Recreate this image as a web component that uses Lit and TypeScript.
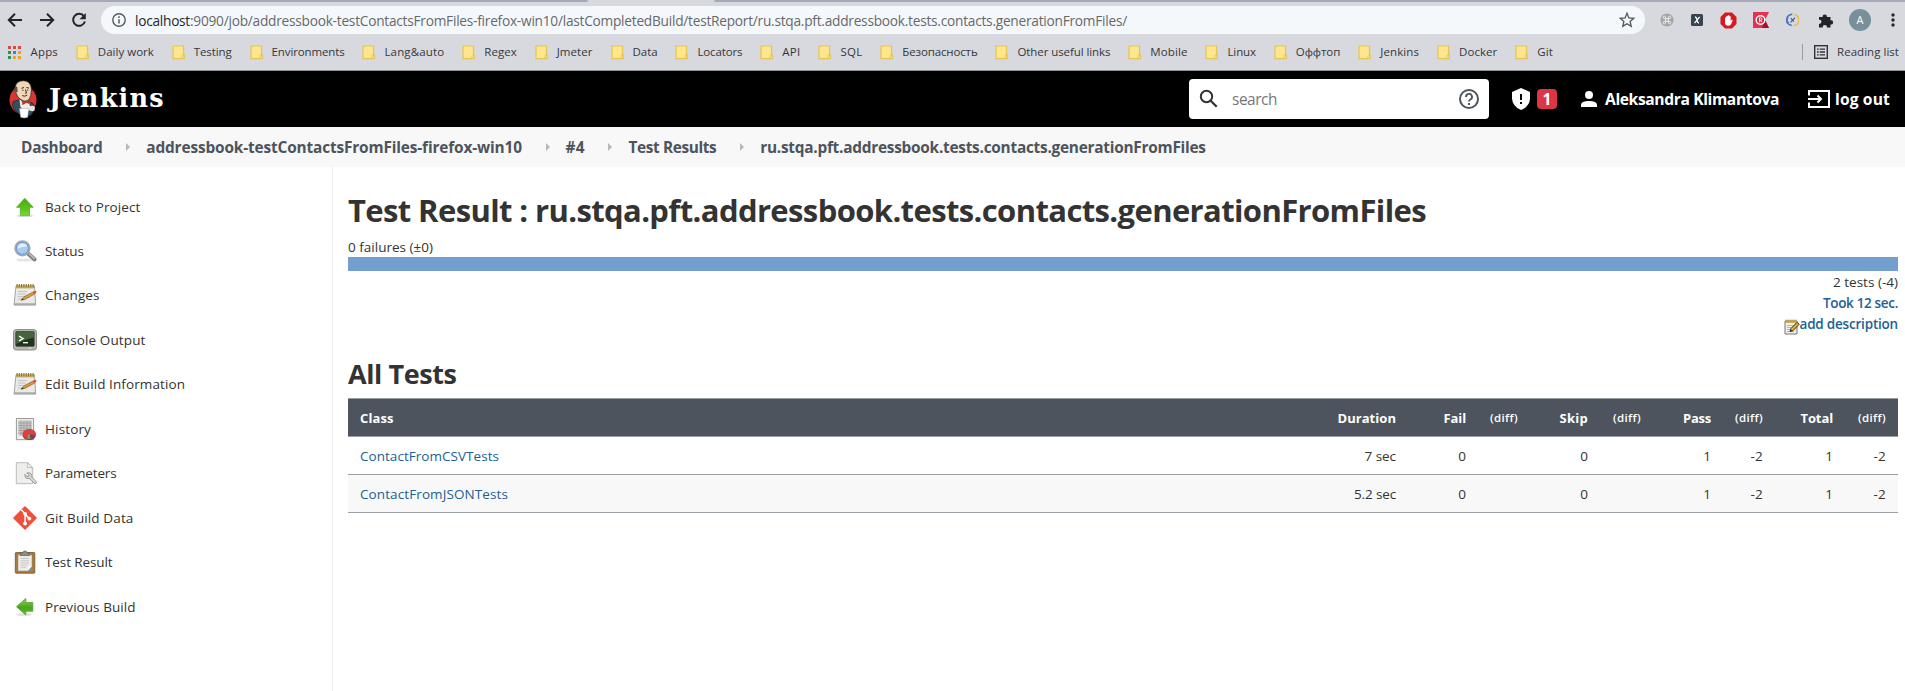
import { LitElement, html, css, svg, nothing } from "lit";
import { customElement, property } from "lit/decorators.js";

/** One line of text, tracked so that it occupies a given width. */
@customElement("text-run")
class TextRun extends LitElement {
  @property() text = "";
  @property({ type: Number }) width = 0;

  static styles = css`
    :host { display: inline-block; white-space: pre; flex: none; }
  `;

  render() {
    return html`<span>${this.text}</span>`;
  }

  updated() {
    const span = this.renderRoot.querySelector("span") as HTMLElement;
    span.style.letterSpacing = "0px";
    if (!this.width || !this.text) return;
    const natural = span.getBoundingClientRect().width;
    const spacing = (this.width - natural) / Array.from(this.text).length;
    span.style.letterSpacing = spacing.toFixed(4) + "px";
  }
}

const run = (text: string, width: number) => html`<text-run .text=${text} .width=${width}></text-run>`;

/* ---------- icons ---------- */

const notepad = svg`
  <path d="M3 3h18.500l1.200 19H1z" fill="#e9e9e7" stroke="#8f8f8b" stroke-width=".8"/>
  <path d="M1.200 20.300h21.300v1.900H1z" fill="#a9a9a5"/>
  <path d="M3.200 2.400h18v3h-18z" fill="#c9b668"/>
  <path d="M4 1v3.600M6.300 1v3.600M8.600 1v3.600M10.900 1v3.600M13.200 1v3.600M15.500 1v3.600M17.800 1v3.600M20.100 1v3.600" stroke="#8a7427" stroke-width="1.100"/>
  <path d="M5 8.500h9M5 11h8M5 13.500h6M5 16h4" stroke="#bdbdba" stroke-width=".9"/>
  <path d="M8 17.300l3-3.500 9.500-5 1.300 2.200-9.600 5.300z" fill="#d99a3c" stroke="#80551c" stroke-width=".6"/>
  <path d="M20 9l1.800-1q1.600-.3 1.900 1.100l-2.300 1.900z" fill="#d8493c"/>
  <path d="M8 17.300l1.700-2 1.200 1.300z" fill="#3b3327"/>`;

const taskIcons: Record<string, unknown> = {
  up: svg`
    <defs><linearGradient id="g-up" x1="0" y1="0" x2="0" y2="1"><stop offset="0" stop-color="#4ea51c"/><stop offset=".6" stop-color="#59c317"/><stop offset="1" stop-color="#7bdc38"/></linearGradient></defs>
    <ellipse cx="12" cy="20.800" rx="8.500" ry="1.300" fill="#d5d5d5"/>
    <path d="M11.800 3.300L20.200 12.300H16.500V20.300H7.300V12.300H3.500Z" fill="url(#g-up)" stroke="#5aa82f" stroke-width=".8"/>`,
  left: svg`
    <defs><linearGradient id="g-left" x1="0" y1="0" x2="0" y2="1"><stop offset="0" stop-color="#8bd15a"/><stop offset=".55" stop-color="#4ba51a"/><stop offset="1" stop-color="#64bf30"/></linearGradient></defs>
    <ellipse cx="11" cy="19.500" rx="8" ry="1.300" fill="#dedede"/>
    <path d="M3.500 11.700L12.800 3.500V7.600H19.800V16.200H12.800V20Z" fill="url(#g-left)" stroke="#4f9e27" stroke-width=".8"/>`,
  search: svg`
    <ellipse cx="12" cy="21" rx="9" ry="1.600" fill="#e6e6e6"/>
    <path d="M15 14.500l6.500 5.800" stroke="#777" stroke-width="4" stroke-linecap="round"/>
    <path d="M16.300 15l5 4.500" stroke="#b9b9b9" stroke-width="1.800" stroke-linecap="round"/>
    <circle cx="9.400" cy="9.300" r="7.300" fill="#a9cdf0" stroke="#a5a8ab" stroke-width="1.700"/>
    <circle cx="9.400" cy="9.300" r="6" fill="none" stroke="#5c8fcb" stroke-width=".9"/>
    <path d="M4.500 9.500q.3-4.600 5-5 4 .1 4.900 3-4.400-.5-9.900 2z" fill="#e1f0fc"/>`,
  notepad,
  terminal: svg`
    <rect x=".5" y="1.500" width="23" height="20.500" rx="2.800" fill="#b5b6b1" stroke="#858782" stroke-width=".9"/>
    <rect x="2.800" y="3.600" width="18.400" height="14.700" rx=".8" fill="#1e331a" stroke="#43473f" stroke-width=".8"/>
    <path d="M3.200 4h17.600v5.500Q11 11.500 3.200 16z" fill="#476440"/>
    <path d="M6 8.200l4 2.300-4 2.300" fill="none" stroke="#fff" stroke-width="1.400"/><path d="M10 14.700h5" stroke="#fff" stroke-width="1.300"/>
    <path d="M15.500 20h3" stroke="#eee" stroke-width=".9"/>`,
  history: svg`
    <path d="M3.400 1.500h17.200v21.200H3.400z" fill="#eeeeec" stroke="#8d8d8b" stroke-width=".9"/>
    <path d="M5.200 3.500h13.500v15H5.200z" fill="#c9c9c7"/>
    <path d="M5.200 6h13.500M5.200 8.500h13.500M5.200 11h13.500M5.200 13.500h13.500M5.200 16h13.500M8 3.500v15M11 3.500v15M14 3.500v15M17 3.500v15" stroke="#929290" stroke-width=".6"/>
    <ellipse cx="16.200" cy="17.700" rx="6.700" ry="5.400" fill="#a32222"/>
    <ellipse cx="16.200" cy="16.900" rx="6.500" ry="5" fill="#dc4141"/>
    <path d="M16.200 17l1.700 5q-2.600.7-4.500-.2z" fill="#7b9a42"/><path d="M16.200 17l6 1.500q-.9 2.800-4.300 3.500z" fill="#5b4b85"/><path d="M15 18.500l1.200-1.500.6 2.500z" fill="#e1a23b"/>`,
  params: svg`
    <path d="M3.300 1.700h11.200l5.200 5v16H3.300z" fill="#eeefec" stroke="#b5b6b2" stroke-width=".9"/>
    <path d="M14.500 1.700q1.200 3-.6 4.600 3.500-.4 5.800.9z" fill="#fff" stroke="#a5a6a2" stroke-width=".7"/>
    <path d="M12 13.300l2 2.200 1.600-.3.300-1.700-2-1.600q2.800-.8 4.200 1 .9 1.400.3 2.800l5.600 5.700-2 1.600-5.500-5.600q-3 .7-4.200-1.200-.6-1.300-.3-2.900z" fill="#d9dad7" stroke="#888a85" stroke-width=".8"/>`,
  git: svg`
    <path d="M12 1L23 12 12 23 1 12z" fill="#ee513b" stroke="#ee513b" stroke-width="1.600" stroke-linejoin="round"/>
    <path d="M8.300 3.800l3.800 4v9.700M12.100 8.300l4.400 4.300" stroke="#fff" stroke-width="1.500" fill="none"/>
    <circle cx="12.100" cy="7.800" r="1.900" fill="#fff"/><circle cx="16.400" cy="12.600" r="1.900" fill="#fff"/><circle cx="12.100" cy="17.500" r="1.900" fill="#fff"/>`,
  clipboard: svg`
    <rect x="2.300" y="2.500" width="19.500" height="20.700" rx=".8" fill="#a9793d" stroke="#7a5423" stroke-width=".8"/>
    <path d="M5 4.800h14v16.200H5z" fill="#ecece9" stroke="#8f8d88" stroke-width=".5"/>
    <path d="M7.500 8.500h8.500M7.500 10.800h8.500M7.500 13h8.500M7.500 15.200h7M7.500 17.400h5.500" stroke="#c5c5c3" stroke-width=".9"/>
    <path d="M19 16l-4.500 5h4.500z" fill="#8c8c88"/><path d="M14.500 21l.7-4.200 3.800-.8z" fill="#fff"/>
    <path d="M7.300 5.500V3.200h2.400Q10 .9 12 .9t2.300 2.300h2.400v2.300z" fill="#8d8f8b" stroke="#5c5e5a" stroke-width=".7"/>`,
};

const folder = html`<svg class="folder" viewBox="0 0 13 15"><path d="M1 1h10.500v8.500l.8.400V13.700H1z" fill="#fde68d" stroke="#e5c453" stroke-width="1.200"/><path d="M10 13.500V10.300q1-.9 2 0v3.200z" fill="#fbe69a" stroke="#e5c453" stroke-width=".9"/></svg>`;

/* ---------- data ---------- */

const bookmarks: [string, number][] = [
  ["Daily work", 56], ["Testing", 38], ["Environments", 73], ["Lang&auto", 60], ["Regex", 32.5],
  ["Jmeter", 36], ["Data", 25], ["Locators", 45], ["API", 18.3], ["SQL", 22], ["Безопасность", 75.300],
  ["Other useful links", 93], ["Mobile", 37.3], ["Linux", 28.5], ["Оффтоп", 44.500], ["Jenkins", 39],
  ["Docker", 38.3], ["Git", 16],
];

const crumbs: [string, number][] = [
  ["Dashboard", 81.500], ["addressbook-testContactsFromFiles-firefox-win10", 375.500], ["#4", 19],
  ["Test Results", 88], ["ru.stqa.pft.addressbook.tests.contacts.generationFromFiles", 445.500],
];

const tasks: [string, string, number][] = [
  ["up", "Back to Project", 95.5], ["search", "Status", 39], ["notepad", "Changes", 54.5],
  ["terminal", "Console Output", 100.5], ["notepad", "Edit Build Information", 140],
  ["history", "History", 46], ["params", "Parameters", 71.5], ["git", "Git Build Data", 88.5],
  ["clipboard", "Test Result", 67.5], ["left", "Previous Build", 90.500],
];

const headings: [string, number][] = [
  ["Class", 33.5], ["Duration", 58.5], ["Fail", 22.5], ["(diff)", 28], ["Skip", 28.5],
  ["(diff)", 28], ["Pass", 28], ["(diff)", 28], ["Total", 32.5], ["(diff)", 28],
];

const rows: [string, number][][] = [
  [["ContactFromCSVTests", 139], ["7 sec", 31.5], ["0", 0], ["", 0], ["0", 0], ["", 0], ["1", 0], ["-2", 12.500], ["1", 0], ["-2", 12.500]],
  [["ContactFromJSONTests", 148], ["5.2 sec", 42], ["0", 0], ["", 0], ["0", 0], ["", 0], ["1", 0], ["-2", 12.500], ["1", 0], ["-2", 12.500]],
];

/* ---------- browser frame ---------- */

@customElement("browser-bar")
class BrowserBar extends LitElement {
  static styles = css`
    :host { display: block; height: 71px; box-sizing: border-box; background: #d8d9df; border-bottom: 1px solid #909599; }
    svg { display: block; flex: none; }
    .tabs { display: flex; height: 2px; justify-content: space-between; }
    .tab-edge { background: #a6a9b7; }
    .tab-edge.before { width: 588px; border-radius: 0 0 3px 0; }
    .tab-edge.after { width: 1191px; border-radius: 0 0 0 3px; }
    .nav { display: flex; align-items: center; height: 36px; }
    .buttons { display: flex; gap: 16px; padding-left: 7px; width: 94px; }
    .address { display: flex; align-items: center; width: 1544px; height: 28px; box-sizing: border-box; border-radius: 14px;
      background: #f5f8fa; padding: 0 8px 0 11px; font-size: 13.700px; color: #65696d; }
    .url { flex: 1; padding-left: 9px; display: flex; }
    .host { color: #24272b; }
    .extensions { display: flex; align-items: center; padding-left: 15px; gap: 12px; }
    .ext-x { margin: 0 5px; }
    .ext-k { margin-left: 4px; }
    .ext-c { margin-left: 5px; }
    .ext-p { margin: 0 5px 0 7px; }
    .more { margin-left: 7px; }
    .avatar { width: 22px; height: 22px; border-radius: 50%; background: #78909c; color: #fff; font-size: 11px; line-height: 22px;
      text-align: center; margin: 0 1px 0 -1px; }
    .marks { display: flex; align-items: center; height: 32px; box-sizing: border-box; font-size: 11.500px; color: #34373b; padding: 0 6px 4px 8px; line-height: 16px; }
    .apps { width: 13px; height: 13px; margin-right: 9.500px; }
    .folder { width: 13px; height: 15px; margin: 0 9px 0 17.860px; }
    .reading { margin-left: auto; display: flex; align-items: center; border-left: 1px solid #9a9da3; height: 16px; padding-left: 11px; gap: 9px; }
  `;

  render() {
    const dots = ["#d84b45", "#d84b45", "#d84b45", "#2f8f57", "#3a7fe0", "#eba32a", "#2f8f57", "#eba32a", "#eba32a"];
    return html`
      <div class="tabs"><div class="tab-edge before"></div><div class="tab-edge after"></div></div>
      <div class="nav">
        <div class="buttons">
          <svg width="16" height="16" viewBox="0 0 16 16"><path d="M15 8H2M8 1.800L1.800 8 8 14.200" fill="none" stroke="#222529" stroke-width="2"/></svg>
          <svg width="16" height="16" viewBox="0 0 16 16"><path d="M1 8h13M8 1.800L14.200 8 8 14.200" fill="none" stroke="#222529" stroke-width="2"/></svg>
          <svg width="16" height="16" viewBox="0 0 16 16"><path d="M13 4.300A6 6 0 1 0 13.900 9.500" fill="none" stroke="#222529" stroke-width="2"/><path d="M14.800 1v6.300H8.500z" fill="#222529"/></svg>
        </div>
        <div class="address">
          <svg width="14" height="14" viewBox="0 0 14 14"><circle cx="7" cy="7" r="6.200" fill="none" stroke="#55595e" stroke-width="1.400"/><path d="M7 6.200v4.300M7 3.300v1.600" stroke="#55595e" stroke-width="1.500"/></svg>
          <div class="url"><span class="host">${run("localhost", 55)}</span>${run(":9090/job/addressbook-testContactsFromFiles-firefox-win10/lastCompletedBuild/testReport/ru.stqa.pft.addressbook.tests.contacts.generationFromFiles/", 937)}</div>
          <svg width="20" height="18" viewBox="0 0 20 18"><path d="M10 2.300l1.900 4.600 4.900.4-3.700 3.200 1.100 4.800-4.200-2.600-4.200 2.600 1.100-4.800-3.700-3.200 4.900-.4z" fill="none" stroke="#515559" stroke-width="1.300"/></svg>
        </div>
        <div class="extensions">
          <svg width="14" height="14" viewBox="0 0 15 15"><circle cx="7.500" cy="7.500" r="7" fill="#a5a5a6"/><path d="M6 6H4.700A1.300 1.300 0 1 1 6 4.700V10.300A1.300 1.300 0 1 1 4.700 9H10.300A1.300 1.300 0 1 1 9 10.300V4.700A1.300 1.300 0 1 1 10.300 6z" fill="none" stroke="#f2f2f2" stroke-width="1"/></svg>
          <svg class="ext-x" width="12" height="12" viewBox="0 0 12 12"><rect width="12" height="12" rx="1.500" fill="#36454f"/><path d="M4 3q1.500 0 2 3t2 3M8.700 2.800L3.500 9.200" stroke="#fff" stroke-width="1.300" fill="none"/></svg>
          <svg width="17" height="17" viewBox="0 0 17 17"><path d="M5 .5h7L16.500 5v7L12 16.500H5L.5 12V5z" fill="#d71a1f"/><path d="M5 9V5.700q.7-.8 1.300 0V4.200q.8-.9 1.500 0v-.7q.8-.9 1.500 0v.9q.8-.7 1.400.2V9l1-1.300q.8-.3 1.100.4L11 12.500q-1 1.300-3 1.300-2.300 0-3-2z" fill="#fff"/></svg>
          <svg class="ext-k" width="16" height="16" viewBox="0 0 16 16"><path d="M0 0h16l-4 8 4 8H0z" fill="#e5324f"/><path d="M9 16L12 8l4 8z" fill="#a80f2e"/><circle cx="7.500" cy="8" r="5" fill="#fff"/><circle cx="7.500" cy="8" r="3.600" fill="#d42343"/><path d="M6.400 10.400V5.900h1.300a1.200 1.200 0 0 1 0 2.500H6.400M7.700 8.400l1.200 2" fill="none" stroke="#fff" stroke-width="1"/></svg>
          <svg class="ext-c" width="13" height="14" viewBox="0 0 12 14"><path d="M5.800 1.400a5.500 5.500 0 0 0-.6 11M1.700 4.200a4 4 0 0 0 .5 6" fill="none" stroke="#4b78c4" stroke-width="1.600"/><path d="M8 1.600a5.500 5.500 0 0 1-1.300 10.900" fill="none" stroke="#e9b949" stroke-width="1.600"/><path d="M4 9.300l4.500-4.600M4.300 5l3 3.600" stroke="#34588c" stroke-width="1.100"/></svg>
          <svg class="ext-p" width="15" height="15" viewBox="0 0 15 15"><path d="M1 4h3.700a2.100 2.100 0 1 1 4.100 0h3.700v3.400a2.100 2.100 0 1 1 0 4.100V14.500H8.900a2.100 2.100 0 1 0-4.100 0H1V10.700a2 2 0 1 0 0-3.900z" fill="#202328"/></svg>
          <div class="avatar">A</div>
          <svg class="more" width="4" height="16" viewBox="0 0 4 16"><circle cx="2" cy="3" r="1.700" fill="#26292d"/><circle cx="2" cy="8" r="1.700" fill="#26292d"/><circle cx="2" cy="13" r="1.700" fill="#26292d"/></svg>
        </div>
      </div>
      <div class="marks">
        <svg class="apps" viewBox="0 0 13 13">${dots.map((c, i) => svg`<rect x=${(i % 3) * 5} y=${Math.floor(i / 3) * 5} width="3" height="3" fill=${c}/>`)}</svg>
        ${run("Apps", 27.5)}
        ${bookmarks.map(([t, w]) => html`${folder}${run(t, w)}`)}
        <div class="reading">
          <svg width="14" height="14" viewBox="0 0 14 14"><rect x=".7" y=".7" width="12.600" height="12.600" fill="none" stroke="#303338" stroke-width="1.400"/><path d="M3 4.200h1.700M5.700 4.200H11M3 7h1.700M5.700 7H11M3 9.800h1.700M5.700 9.800H11" stroke="#303338" stroke-width="1.300"/></svg>
          ${run("Reading list", 62)}
        </div>
      </div>
    `;
  }
}

/* ---------- Jenkins header ---------- */

@customElement("jenkins-header")
class JenkinsHeader extends LitElement {
  static styles = css`
    :host { display: flex; align-items: center; height: 56px; background: #000; color: #fff; box-sizing: border-box; padding: 0 15px 0 9px; font-size: 15.600px; font-weight: 700; }
    svg { display: block; flex: none; }
    .brand { font: 700 25.500px/36px "DejaVu Serif", serif; margin-left: 12px; padding-bottom: 3px; }
    .search { display: flex; align-items: center; box-sizing: border-box; width: 300px; height: 40px; border-radius: 4px; background: #fff;
      margin-left: auto; padding: 0 10px 0 10px; color: #777; font-weight: 400; font-size: 15.400px; }
    .field { flex: 1; padding-left: 13px; }
    .badge { width: 20px; height: 20px; border-radius: 4px; background: #dc3545; text-align: center; line-height: 20px; margin: 0 22px 0 6px; }
    .alert { margin-left: 22px; }
    .name { margin: 0 29px 0 6px; }
    .exit { margin-right: 5px; }
  `;

  render() {
    return html`
      <svg width="28" height="40" viewBox="0 0 28 40">
        <ellipse cx="14" cy="21" rx="13.500" ry="14" fill="#d33833"/>
        <path d="M6.500 32Q2 27 4.300 22.500L11 20.500l8 1.500 5.500 3 1 6-4 5.500-8 1.500z" fill="#335061" stroke="#172229" stroke-width=".7"/>
        <path d="M10.500 20l5 4.500 4.500-3 1.300 9-5 4-5-7z" fill="#f3ece6"/>
        <path d="M13 21l3.500 1.300 3.300-1.500.3 3.700-3-.8-3.500 2z" fill="#d33833" stroke="#651b18" stroke-width=".4"/>
        <path d="M6 9Q7 1.500 14.500 1.700 21.500 2 22.300 9q.3 9-3.300 12.500-4 2-8-1.500Q8 17.500 7.300 14.500 5 13 6 9z" fill="#f0d6b7" stroke="#27201c" stroke-width=".7"/>
        <path d="M6.200 7.500l2 .2.500 5-1.700 1Q4.800 11.500 6.200 7.500z" fill="#5d5146"/>
        <path d="M12.500 9.300l2.500-.8M17.500 8.500l2.500.6M13.300 11.200h1.300M18 11h1.200M16.500 10.500l1 3.500-1.500.2M13.200 16.600q2.500 1.400 5-.5" fill="none" stroke="#3b2a20" stroke-width="1"/>
        <path d="M10.500 29.500h9l-.8 8.700q-3.500 1.500-7 0z" fill="#fff" stroke="#aaa" stroke-width=".5"/>
        <path d="M20 27.500q4-1.500 6 .5l-.5 3.500q-3 1.500-5.500-.5z" fill="#e8e3df"/>
      </svg>
      <div class="brand">${run("Jenkins", 116)}</div>
      <div class="search">
        <svg width="20" height="20" viewBox="0 0 20 20"><circle cx="7.500" cy="7.500" r="5.700" fill="none" stroke="#333" stroke-width="2"/><path d="M11.700 11.700l6 6" stroke="#333" stroke-width="2.300"/></svg>
        <div class="field">${run("search", 45)}</div>
        <svg width="20" height="20" viewBox="0 0 20 20"><circle cx="10" cy="10" r="9" fill="none" stroke="#4d545d" stroke-width="2"/><path d="M7 7.900a3 3 0 1 1 4.400 2.600Q10 11.200 10 12.600" fill="none" stroke="#4d545d" stroke-width="1.900"/><path d="M9 14h2v2H9z" fill="#4d545d"/></svg>
      </div>
      <svg class="alert" width="20" height="22" viewBox="0 0 20 22"><path d="M10 0l9 3.900V10.500Q18.500 18.500 10 22 1.500 18.500 1 10.500V3.900z" fill="#fff"/><path d="M10 6v6M10 14v2" stroke="#000" stroke-width="2"/></svg>
      <div class="badge">1</div>
      <svg width="20" height="20" viewBox="0 0 20 20"><ellipse cx="10" cy="6" rx="4" ry="4" fill="#fff"/><path d="M2 18v-2.200Q2 12 10 12t8 3.800V18z" fill="#fff"/></svg>
      <div class="name">${run("Aleksandra Klimantova", 174)}</div>
      <svg class="exit" width="22" height="18" viewBox="0 0 22 18"><path d="M1 5.500V1h20v16H1v-4.500M0 9h12.500M9.500 5.500L13 9l-3.500 3.500" fill="none" stroke="#fff" stroke-width="2"/></svg>
      ${run("log out", 55)}
    `;
  }
}

/* ---------- page ---------- */

@customElement("app-root")
class AppRoot extends LitElement {
  static styles = css`
    :host { display: flex; flex-direction: column; height: 691px; overflow: hidden; background: #fff; color: #333;
      font-family: "Open Sans", "Noto Sans", sans-serif; font-size: 13.500px; }
    svg { display: block; flex: none; }
    .crumbs { display: flex; align-items: center; height: 40px; background: #f8f8f8; padding: 1px 22px 0 21px; font-size: 15.400px; font-weight: 700;
      color: #4d545d; box-sizing: border-box; }
    .sep { width: 4px; height: 8px; margin: -2px 16px 0 23.800px; }
    .body { display: flex; flex: 1; }
    .side { border-right: 1px solid #eee; padding: 17.300px 0 0 13px; width: 319px; }
    .task { display: flex; align-items: center; height: 44.480px; gap: 8px; font-weight: 500; }
    .main { flex: 1; padding: 23px 7px 0 15px; }
    h1, h2 { margin: 0; font-weight: 700; }
    h1 { font-size: 31px; line-height: 40px; margin-bottom: 7px; }
    h2 { font-size: 27px; line-height: 36px; margin: 21px 0 6px; }
    .failures { line-height: 20px; height: 20px; }
    .bar { height: 14px; background: #729fcf; }
    .line { display: flex; justify-content: flex-end; align-items: center; height: 21px; line-height: 21px; }
    .count { padding-top: 1px; }
    .link { color: #225f94; font-weight: 600; }
    .pen { margin-top: 4px; }
    .table { border-top: 1px solid #989fa5; }
    .row { display: grid; grid-template-columns: 1fr 100px 70px 52px 70px 53px 70px 52px 70px 53px; height: 37px; align-items: center;
      border-bottom: 1px solid #989fa5; }
    .row.even { background: #f8f8f8; }
    .row.head { background: #4d545d; color: #fff; font-weight: 700; font-size: 13px; }
    .cell { text-align: right; padding-right: 12px; }
    .cell.first { text-align: left; padding-left: 12px; }
    .row.data .first { color: #225f94; font-weight: 500; }
    .head .diff { font-size: 11.500px; font-weight: 600; padding-bottom: 1px; }
  `;

  render() {
    return html`
      <browser-bar></browser-bar>
      <jenkins-header></jenkins-header>
      <nav class="crumbs">
        ${crumbs.map(([t, w], i) => html`${i ? html`<svg class="sep" viewBox="0 0 4 8"><path d="M0 0l4 4-4 4z" fill="#b5b7ba"/></svg>` : nothing}${run(t, w)}`)}
      </nav>
      <div class="body">
        <aside class="side">
          ${tasks.map(([icon, t, w]) => html`<div class="task"><svg width="24" height="24" viewBox="0 0 24 24">${taskIcons[icon]}</svg>${run(t, w)}</div>`)}
        </aside>
        <main class="main">
          <h1>${run("Test Result : ru.stqa.pft.addressbook.tests.contacts.generationFromFiles", 1078)}</h1>
          <div class="failures">${run("0 failures (±0)", 85)}</div>
          <div class="bar"></div>
          <div class="line count">${run("2 tests (-4)", 65)}</div>
          <div class="line link">${run("Took 12 sec.", 75)}</div>
          <div class="line link">
            <svg class="pen" width="16" height="16" viewBox="0 0 16 16"><path d="M1 2h12v13H1z" fill="#eeeeeb" stroke="#777" stroke-width="1"/><path d="M1 1.800h12.500v2H1z" fill="#d8b63e"/><path d="M2 .5v3M4 .5v3M6 .5v3M8 .5v3M10 .5v3M12 .5v3" stroke="#a88419" stroke-width=".8"/><path d="M3 6.500h7M3 8.500h6M3 10.500h3M3 12.500h7" stroke="#aaa" stroke-width=".8"/><path d="M6 12.500l1-3L13 3.300l2.200 2L9 11.700z" fill="#e0ae45" stroke="#443414" stroke-width="1"/><path d="M6 12.500l.7-2 1.300 1.300z" fill="#222"/></svg>
            ${run("add description", 98.500)}
          </div>
          <h2>${run("All Tests", 108.500)}</h2>
          <div class="table">
            <div class="row head">${headings.map(([t, w], i) => html`<div class="cell ${i ? "" : "first"} ${t === "(diff)" ? "diff" : ""}">${run(t, w)}</div>`)}</div>
            ${rows.map((row, r) => html`<div class="row data ${r % 2 ? "even" : ""}">${row.map(([t, w], i) => html`<div class="cell ${i ? "" : "first"}">${t ? run(t, w) : nothing}</div>`)}</div>`)}
          </div>
        </main>
      </div>
    `;
  }
}
